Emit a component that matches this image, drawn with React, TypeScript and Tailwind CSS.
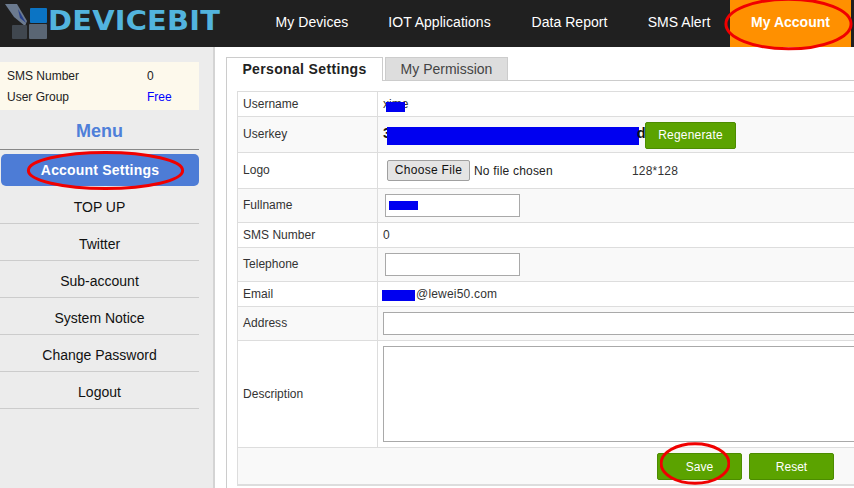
import React from "react";

const F = "font-['Liberation_Sans',Arial,sans-serif]";

function Ellipse({ className }: { className: string }) {
  return (
    <svg className={`absolute pointer-events-none ${className}`} viewBox="0 0 100 100" preserveAspectRatio="none">
      <ellipse cx="50" cy="50" rx="48.5" ry="46" fill="none" stroke="#f00000" strokeWidth="3" vectorEffect="non-scaling-stroke" />
    </svg>
  );
}

function Redact({ className }: { className: string }) {
  return <span className={`absolute bg-[#0000f0] ${className}`} />;
}

function Row({ label, h, alt, children }: { label: string; h: string; alt?: boolean; children?: React.ReactNode }) {
  return (
    <div className={`flex border-b border-[#dddddd] ${h} ${alt ? "bg-[#f9f9f9]" : "bg-white"}`}>
      <div className="w-[140px] shrink-0 border-r border-[#dddddd] pl-[5px] flex items-center pb-[1px] text-[#333333]">{label}</div>
      <div className="relative flex-1 flex items-center min-w-0">{children}</div>
    </div>
  );
}

const nav = [
  { t: "My Devices", w: "w-[112px]" },
  { t: "IOT Applications", w: "w-[143px]" },
  { t: "Data Report", w: "w-[117px]" },
  { t: "SMS Alert", w: "w-[102px]" },
];
const menu = ["TOP UP", "Twitter", "Sub-account", "System Notice", "Change Password", "Logout"];

export default function App() {
  return (
    <div className={`relative w-[854px] h-[488px] overflow-hidden bg-white ${F} text-[12px]`}>
      <header className="flex h-[47px] bg-[#202020]">
        <div className="w-[256px] shrink-0 flex items-start">
          <svg width="50" height="38" viewBox="0 0 50 38" className="mt-[3px] shrink-0">
            <path d="M5 1H17L27 18L25 23L14 14Z" fill="#6b7a8f" />
            <path d="M18 6L26 20L20 15Z" fill="#27408b" />
            <rect x="30" y="5" width="17" height="15" rx="1" fill="#0b74c4" />
            <rect x="12" y="22" width="15" height="14" rx="1" fill="#40474f" />
            <rect x="29" y="21" width="18" height="15" rx="1" fill="#5a6674" />
          </svg>
          <span className="mt-[6px] -ml-[2px] origin-left scale-x-[1.07] font-['DejaVu_Sans',sans-serif] font-bold text-[27px] leading-[30px] tracking-[0.2px] text-[#52b4de]">DEVICEBIT</span>
        </div>
        <nav className="flex text-[14px] text-white">
          {nav.map((n) => (
            <div key={n.t} className={`${n.w} text-center leading-[45px] tracking-[0.05px]`}>{n.t}</div>
          ))}
          <div className="w-[121px] text-center leading-[45px] font-bold bg-[#ff9000]">My Account</div>
        </nav>
      </header>

      <div className="flex h-[441px]">
        <aside className="w-[215px] shrink-0 bg-[#ececec] border-r-2 border-[#d4d4d4] pt-[15px]">
          <div className="w-[199px] h-[48px] bg-[#fdf9ec] pl-[7px] pt-[3px] text-[#222222]">
            <div className="flex h-[21px] items-center"><span className="w-[140px]">SMS Number</span><span>0</span></div>
            <div className="flex h-[21px] items-center"><span className="w-[140px]">User Group</span><span className="text-[#0000ff]">Free</span></div>
          </div>
          <div className="w-[199px] h-[40px] border-b border-[#888888] text-center text-[18px] font-bold text-[#4f7fd9] leading-[42px]">Menu</div>
          <div className="w-[198px] ml-[1px] mt-[4px] mb-[1px] h-[32px] rounded-[5px] bg-[#4d7cd6] text-center text-[14px] font-bold text-white leading-[32px] tracking-[0.2px]">Account Settings</div>
          {menu.map((m) => (
            <div key={m} className="w-[199px] h-[37px] border-b border-[#cccccc] text-center text-[14px] text-[#111111] leading-[40px]">{m}</div>
          ))}
        </aside>

        <main className="flex-1 pl-[11px] pt-[10px] min-w-0">
          <div className="flex h-[24px] border-b border-[#cccccc] items-end">
            <div className="w-[157px] h-[24px] -mb-px bg-white border border-b-0 border-[#cccccc] text-center text-[14px] font-bold text-[#222222] tracking-[0.35px] leading-[22px]">Personal Settings</div>
            <div className="ml-[2px] w-[123px] h-[23px] bg-[#dddddd] border border-b-0 border-[#cccccc] text-center text-[14px] text-[#444444] leading-[22px]">My Permission</div>
          </div>
          <div className="border-l border-[#cccccc] pl-[10px] pt-[10px] h-[407px]">
            <div className="border border-r-0 border-[#dddddd] text-[#333333] tracking-[0.02px]">
              <Row label="Username" h="h-[25px]">
                <span className="ml-[5px]">xime</span>
                <Redact className="left-[8px] top-[10px] w-[19px] h-[10px]" />
              </Row>
              <Row label="Userkey" h="h-[36px]" alt>
                <span className="ml-[5px] mb-[2px] text-[14px] font-bold text-[#111111]">3</span>
                <Redact className="left-[9px] top-[10px] w-[252px] h-[18px]" />
                <span className="absolute left-[259px] top-[6px] text-[14px] font-bold text-[#111111]">d</span>
                <div className="absolute left-[267px] top-[5px] w-[91px] h-[27px] rounded-[2px] bg-[#5ba300] border border-[#4c8c00] text-center text-white leading-[25px] tracking-[0.2px]">Regenerate</div>
              </Row>
              <Row label="Logo" h="h-[36px]">
                <div className="ml-[9px] w-[83px] h-[21px] rounded-[2px] bg-[#e4e4e4] border border-[#a0a0a0] text-center text-[#111111] leading-[19px] tracking-[0.3px]">Choose File</div>
                <span className="ml-[4px] text-[#222222] tracking-[0.2px]">No file chosen</span>
                <span className="absolute left-[254px] top-[9px] text-[#333333] tracking-[0.2px]">128*128</span>
              </Row>
              <Row label="Fullname" h="h-[34px]" alt>
                <div className="relative ml-[7px] mb-[1px] w-[135px] h-[23px] bg-white border border-[#a9a9a9]">
                  <Redact className="left-[3px] top-[6px] w-[29px] h-[9px]" />
                </div>
              </Row>
              <Row label="SMS Number" h="h-[25px]"><span className="ml-[5px] mb-[1px]">0</span></Row>
              <Row label="Telephone" h="h-[34px]" alt>
                <div className="ml-[7px] mb-[1px] w-[135px] h-[23px] bg-white border border-[#a9a9a9]" />
              </Row>
              <Row label="Email" h="h-[25px]">
                <span className="ml-[38px] mb-[1px] tracking-[0.2px]">@lewei50.com</span>
                <Redact className="left-[4px] top-[8px] w-[33px] h-[11px]" />
              </Row>
              <Row label="Address" h="h-[34px]" alt>
                <div className="ml-[5px] mb-[1px] w-[480px] h-[23px] shrink-0 bg-white border border-[#a9a9a9]" />
              </Row>
              <Row label="Description" h="h-[107px]">
                <div className="ml-[5px] w-[480px] h-[96px] shrink-0 bg-white border border-[#a9a9a9]" />
              </Row>
              <div className="flex h-[37px] border-b border-[#dddddd] bg-[#f9f9f9] pl-[419px] pt-[5px] gap-[7px] text-white">
                <div className="w-[85px] h-[27px] rounded-[2px] bg-[#5ba300] border border-[#4c8c00] text-center leading-[26px]">Save</div>
                <div className="w-[85px] h-[27px] rounded-[2px] bg-[#5ba300] border border-[#4c8c00] text-center leading-[26px]">Reset</div>
              </div>
            </div>
          </div>
        </main>
      </div>

      <Ellipse className="left-[724px] -top-[3px] w-[129px] h-[54px]" />
      <Ellipse className="left-[26px] top-[151px] w-[159px] h-[39px]" />
      <Ellipse className="left-[660px] top-[442px] w-[70px] h-[43px]" />
    </div>
  );
}
